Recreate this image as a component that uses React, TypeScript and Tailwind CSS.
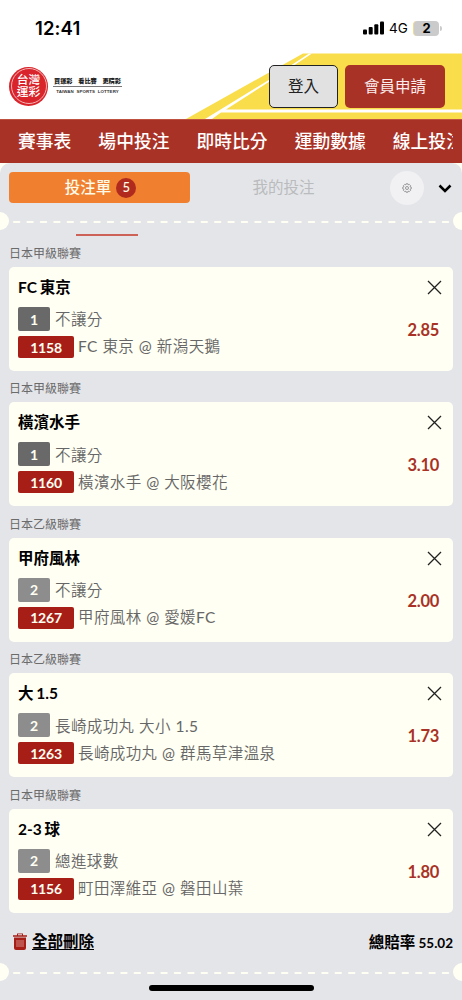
import clsx from "clsx";

type Bet = {
  league: string;
  pick: string;
  tag: string;
  tagDark?: boolean;
  market: string;
  code: string;
  match: string;
  odds: string;
};

const navItems = ["賽事表", "場中投注", "即時比分", "運動數據", "線上投注"];

const bets: Bet[] = [
  {
    league: "日本甲級聯賽",
    pick: "FC 東京",
    tag: "1",
    tagDark: true,
    market: "不讓分",
    code: "1158",
    match: "FC 東京 @ 新潟天鵝",
    odds: "2.85",
  },
  {
    league: "日本甲級聯賽",
    pick: "橫濱水手",
    tag: "1",
    tagDark: true,
    market: "不讓分",
    code: "1160",
    match: "橫濱水手 @ 大阪櫻花",
    odds: "3.10",
  },
  {
    league: "日本乙級聯賽",
    pick: "甲府風林",
    tag: "2",
    market: "不讓分",
    code: "1267",
    match: "甲府風林 @ 愛媛FC",
    odds: "2.00",
  },
  {
    league: "日本乙級聯賽",
    pick: "大 1.5",
    tag: "2",
    market: "長崎成功丸 大小 1.5",
    code: "1263",
    match: "長崎成功丸 @ 群馬草津溫泉",
    odds: "1.73",
  },
  {
    league: "日本甲級聯賽",
    pick: "2-3 球",
    tag: "2",
    market: "總進球數",
    code: "1156",
    match: "町田澤維亞 @ 磐田山葉",
    odds: "1.80",
  },
];

function StatusBar() {
  return (
    <div className="flex h-[53px] items-start justify-between pt-[17px] pr-[20px] pl-[35px] font-['Inter',sans-serif]">
      <span className="text-[18.5px] leading-[22px] font-semibold tracking-[0.1px] text-black">
        12:41
      </span>
      <div className="flex h-[22px] items-center">
        <svg width="21" height="14" viewBox="0 0 21 14">
          <rect x="0" y="8.5" width="4" height="5" rx="1" />
          <rect x="5.7" y="6" width="4" height="7.5" rx="1" />
          <rect x="11.3" y="3.3" width="4" height="10.2" rx="1" />
          <rect x="17" y="0.5" width="4" height="13" rx="1" />
        </svg>
        <span className="ml-[5px] w-[24px] text-[13.5px] text-black">4G</span>
        <span className="flex h-[15px] w-[26px] items-center justify-center rounded-[4px] border-l border-[#f2d98c] bg-[#cbcbcb] text-[13px] leading-none font-bold text-black">
          2
        </span>
        <span className="ml-px h-[5px] w-[2px] rounded-r-full bg-[#cbcbcb]" />
      </div>
    </div>
  );
}

function Logo() {
  return (
    <div className="flex items-center gap-[5px]">
      <div className="flex size-[39px] items-center justify-center rounded-full bg-[#d9242b] p-[1.5px]">
        <div className="flex size-full flex-col items-center justify-center rounded-full border border-[#f3b5b5] text-[11.8px] leading-[12px] font-medium text-white">
          <span>台灣</span>
          <span>運彩</span>
        </div>
      </div>
      <div className="-mt-[2px] flex w-[69px] flex-col items-center">
        <div className="flex w-full justify-between px-px pb-[1px] text-[6.2px] leading-[9px] font-black text-[#222]">
          <span>買運彩</span>
          <span>看比賽</span>
          <span>更精彩</span>
        </div>
        <div className="h-px w-full bg-[#777]" />
        <span className="pt-px font-['Liberation_Sans',sans-serif] text-[4.4px] leading-[7px] font-bold tracking-[0.1px] whitespace-nowrap text-[#333]">
          TAIWAN&nbsp; SPORTS&nbsp; LOTTERY
        </span>
      </div>
    </div>
  );
}

function Header() {
  return (
    <header className="relative flex h-[66px] items-center justify-between pr-[17px] pl-[9px]">
      <svg
        className="absolute top-0 left-0"
        width="462"
        height="66"
        viewBox="0 0 462 66"
      >
        <path d="M186 66 303 .5H462V66Z" fill="#f9dd4a" />
        <path d="M205 66 268 27.5 309 .5H312L268 29.5 226 56.5H462V59.5H221L212 66Z" fill="#fff" />
      </svg>
      <Logo />
      <div className="relative flex gap-[7px]">
        <button className="h-[43px] w-[69px] rounded-[5px] border border-[#222] bg-[#e1e1e1] pt-[2px] text-[15.5px] text-[#222]">
          登入
        </button>
        <button className="h-[43px] w-[100px] rounded-[5px] bg-[#a93226] pt-[2px] text-[15.5px] text-[#fbeeee]">
          會員申請
        </button>
      </div>
    </header>
  );
}

function Nav() {
  return (
    <nav className="h-[44px] border-t border-[#bf5140] bg-[#a93226] px-[9px]">
      <div className="flex h-full items-center gap-[27px] overflow-hidden pl-[9px] text-[17.8px] font-medium whitespace-nowrap text-white">
        {navItems.map((item) => (
          <span key={item} className="shrink-0">
            {item}
          </span>
        ))}
      </div>
    </nav>
  );
}

// Ticket style tear line with a notch on each side
function TearLine() {
  return (
    <div className="flex h-[18px] items-center overflow-hidden">
      <div className="-ml-[9px] size-[18px] shrink-0 rounded-full bg-[#fffff3]" />
      <svg className="mt-[2px] flex-1" height="4" width="444">
        <path
          d="M5 2H440"
          stroke="#fffff3"
          strokeWidth="2"
          strokeDasharray="5.4 8"
          strokeLinecap="round"
        />
      </svg>
      <div className="-mr-[9px] size-[18px] shrink-0 rounded-full bg-[#fffff3]" />
    </div>
  );
}

function SlipTabs() {
  return (
    <div className="flex h-[49px] items-center pr-[10px] pl-[9px]">
      <div className="flex h-[31px] w-[181px] items-center justify-center gap-[5px] rounded-[4px] bg-[#f08030] pl-[2px] text-[15.5px] font-medium text-[#fffbe8]">
        <span className="pt-px">投注單</span>
        <span className="flex size-[20px] items-center justify-center rounded-full bg-[#b02a1e] text-[13px] leading-none">
          5
        </span>
      </div>
      <span className="w-[187px] pt-px text-center text-[15.5px] text-[#b9bbbd]">我的投注</span>
      <div className="ml-[13px] flex size-[34px] items-center justify-center rounded-full bg-[#f1f1f4]">
        <svg width="10" height="10" viewBox="0 0 20 20" fill="none" stroke="#888" strokeWidth="1.7">
          <path d="M8.3 1.5h3.4l.6 2.2 2.3-.9 2.5 2.5-1 2.2 2.4.8v3.4l-2.4.8 1 2.2-2.5 2.5-2.3-.9-.6 2.2H8.3l-.6-2.2-2.3.9-2.5-2.5 1-2.2-2.4-.8V8.3l2.4-.8-1-2.2 2.5-2.5 2.3.9Z" />
          <circle cx="10" cy="10" r="3" />
        </svg>
      </div>
      <svg className="mt-[2px] ml-[14px]" width="14" height="9" viewBox="0 0 14 9">
        <path d="M1.5 1.5 7 7l5.5-5.5" fill="none" stroke="#000" strokeWidth="2.5" />
      </svg>
    </div>
  );
}

// Lato Light is too thin beside the CJK strokes, so Latin runs get the regular weight
function MixedText({ text }: { text: string }) {
  return (
    <span className="text-[15.5px] font-[350] tracking-[0.4px] whitespace-pre text-[#666]">
      {text.split(/([A-Z0-9@.]+)/).map((part, i) =>
        i % 2 ? (
          <span key={i} className="font-normal">
            {part}
          </span>
        ) : (
          part
        ),
      )}
    </span>
  );
}

function BetCard({ bet }: { bet: Bet }) {
  return (
    <section className="h-[135.4px] px-[9px]">
      <h3 className="h-[27px] text-[12px] leading-[28px] text-[#6b6b6b]">{bet.league}</h3>
      <div className="flex h-[104px] justify-between rounded-[5px] bg-[#fffff3] pr-[11px] pl-[9px]">
        <div>
          <p className="h-[40px] text-[15.5px] leading-[40px] font-bold [word-spacing:-1px] text-black">
            {bet.pick}
          </p>
          <div className="flex h-[24px] items-center gap-[5px]">
            <span
              className={clsx(
                "flex h-[24px] w-[32px] items-center justify-center rounded-[2px] text-[14px] font-bold text-[#fffff3]",
                bet.tagDark ? "bg-[#696969]" : "bg-[#8d8d8d]",
              )}
            >
              {bet.tag}
            </span>
            <div className="pt-px">
              <MixedText text={bet.market} />
            </div>
          </div>
          <div className="mt-[5px] flex h-[22px] items-center gap-[4px]">
            <span className="flex h-[22px] w-[56px] items-center justify-center rounded-[2px] bg-[#a71e16] text-[14px] font-bold tracking-[-0.2px] text-[#fffff3]">
              {bet.code}
            </span>
            <MixedText text={bet.match} />
          </div>
        </div>
        <div className="flex flex-col items-end">
          <svg className="mt-[13px]" width="15" height="15" viewBox="0 0 15 15">
            <path d="M1 1 14 14M14 1 1 14" stroke="#222" strokeWidth="1.3" />
          </svg>
          <span className="mt-[23px] mr-[3px] text-[16.5px] leading-[24px] font-bold tracking-[-0.3px] text-[#a93226]">
            {bet.odds}
          </span>
        </div>
      </div>
    </section>
  );
}

function SlipFooter() {
  return (
    <div className="flex h-[46px] items-center justify-between pr-[9px] pl-[13px] font-bold text-black">
      <div className="flex items-center gap-[5px]">
        <svg width="14" height="17" viewBox="0 0 14 17">
          <path d="M0 2.2h4V.5h6v1.7h4v1.5H0ZM5 1.3v.9h4v-.9Z" fill="#a71e16" fillRule="evenodd" />
          <path d="M1 4.5h12V15a2 2 0 0 1-2 2H3a2 2 0 0 1-2-2Z" fill="#a71e16" />
          <path d="M4 7v7M6 7v7M8 7v7M10 7v7" stroke="#e9b9b5" strokeWidth="0.7" />
        </svg>
        <span className="border-b border-black text-[15.5px] leading-[16px]">全部刪除</span>
      </div>
      <span className="pt-px text-[13.5px]">
        <span className="text-[15.5px]">總賠率</span> 55.02
      </span>
    </div>
  );
}

export default function App() {
  return (
    <div className="flex h-[1000px] w-[462px] flex-col overflow-hidden bg-white font-['Lato','Noto_Sans_CJK_TC',sans-serif]">
      <StatusBar />
      <Header />
      <Nav />
      <main className="flex-1 bg-[#fffff3]">
        <div className="relative h-full rounded-t-[10px] bg-[#e4e5e9]">
          <SlipTabs />
          <TearLine />
          <div className="mt-[4px] ml-[76px] h-[1.5px] w-[62px] bg-[#cc6258]" />
          <div className="mt-[4.5px]">
            {bets.map((bet) => (
              <BetCard key={bet.code} bet={bet} />
            ))}
          </div>
          <div className="mt-[2px]">
            <SlipFooter />
          </div>
          <div className="-mt-[2px]">
            <TearLine />
          </div>
          <div className="absolute bottom-[9px] left-[149px] h-[6px] w-[165px] rounded-full bg-black" />
        </div>
      </main>
    </div>
  );
}
